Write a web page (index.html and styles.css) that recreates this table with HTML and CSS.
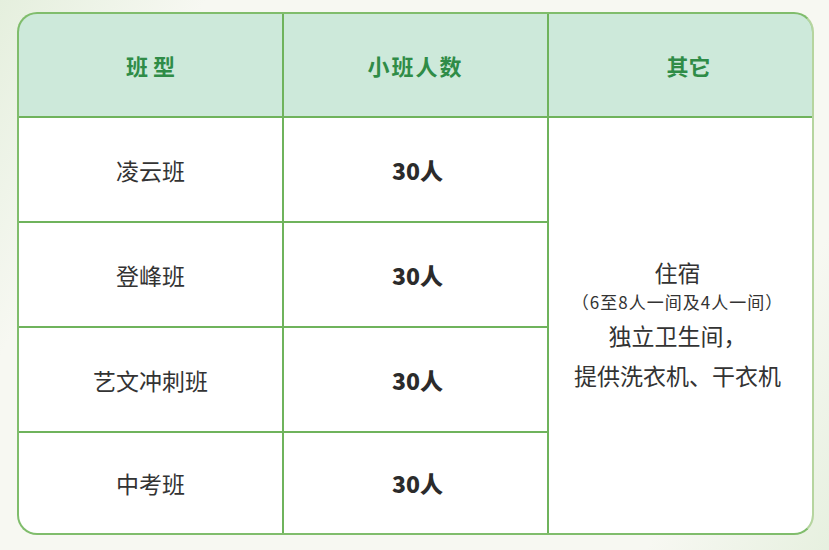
FILE: index.html
```html
<!DOCTYPE html>
<html lang="zh">
<head>
<meta charset="utf-8">
<link rel="stylesheet" href="styles.css">
</head>
<body>
<div class="page">
  <div class="table">
    <div class="cell head">班 型</div>
    <div class="cell head spaced">小班人数</div>
    <div class="cell head shifted">其它</div>

    <div class="cell name">凌云班</div>
    <div class="cell num">30人</div>
    <div class="cell other">
      <div class="big">住宿</div>
      <div class="small">（6至8人一间及4人一间）</div>
      <div class="big l2">独立卫生间，</div>
      <div class="big l3">提供洗衣机、干衣机</div>
    </div>

    <div class="cell name">登峰班</div>
    <div class="cell num">30人</div>

    <div class="cell name">艺文冲刺班</div>
    <div class="cell num">30人</div>

    <div class="cell name">中考班</div>
    <div class="cell num">30人</div>
  </div>
</div>
</body>
</html>
```

FILE: styles.css
```css
html, body {
  margin: 0;
  padding: 0;
}
body {
  width: 829px;
  height: 550px;
  overflow: hidden;
  font-family: "Noto Sans CJK SC", "Noto Sans", sans-serif;
  background:
    linear-gradient(120deg, rgba(214,232,205,0.55) 0%, rgba(247,249,243,0) 18%),
    linear-gradient(300deg, rgba(214,232,205,0.5) 0%, rgba(247,249,243,0) 16%),
    #f7f8f2;
}
.page {
  padding: 12px 0 0 17px;
}
.table {
  box-sizing: border-box;
  width: 797px;
  height: 523px;
  border: 2px solid #80bd6c;
  border-right-color: #b6d59f;
  border-radius: 20px;
  overflow: hidden;
  background: #6fb35c;
  display: grid;
  grid-template-columns: 1fr 1fr 1fr;
  grid-template-rows: 102px 103px 103px 103px 100px;
  gap: 2px;
}
.cell {
  background: #fff;
  display: flex;
  align-items: center;
  justify-content: center;
  color: #333;
  font-size: 23px;
}
.head {
  background: #cde9da;
  color: #2f8c47;
  font-weight: 700;
  font-size: 22px;
}
.spaced {
  letter-spacing: 2px;
}
.shifted {
  padding-left: 16px;
}
.num {
  font-weight: 800;
  font-size: 23px;
  color: #2b2b2b;
  padding-left: 4px;
}
.other {
  grid-column: 3;
  grid-row: 2 / 6;
  flex-direction: column;
  padding-right: 6px;
  padding-bottom: 4px;
}
.other .big {
  font-size: 23px;
  line-height: 28px;
}
.other .small {
  font-size: 17px;
  line-height: 22px;
  letter-spacing: 1px;
  margin-top: 5px;
}
.other .l2 {
  margin-top: 8px;
}
.other .l3 {
  margin-top: 12px;
}
```
